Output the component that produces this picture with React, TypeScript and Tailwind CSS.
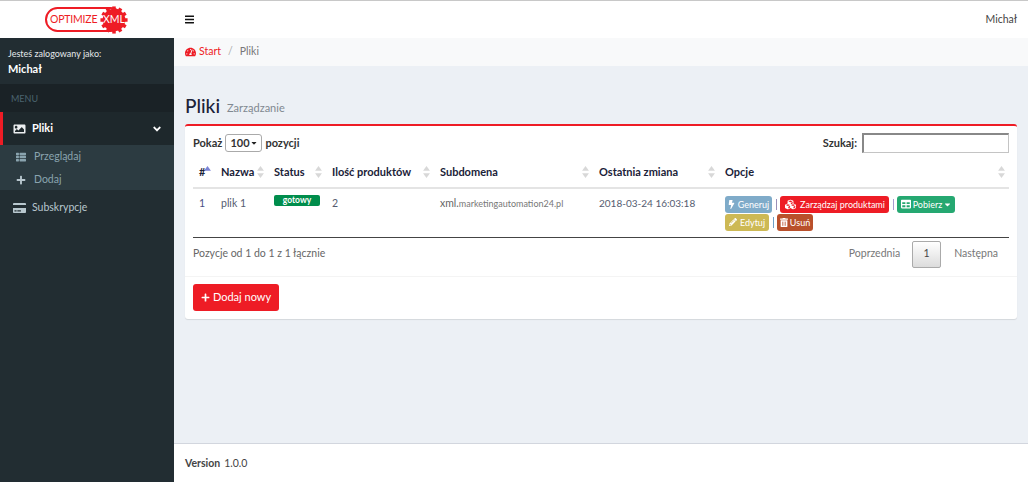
// App.tsx
// Optimize XML panel - file list screen
import type { ReactNode } from 'react';
import {
  FaBars,
  FaAngleDown,
  FaTachometerAlt,
  FaImage,
  FaThList,
  FaPlus,
  FaCreditCard,
  FaBolt,
  FaCubes,
  FaTable,
  FaPencilAlt,
  FaTrashAlt,
  FaCaretDown,
} from 'react-icons/fa';

function SortArrows({ active = false }: { active?: boolean }) {
  return (
    <svg viewBox="0 0 8 14" className="absolute right-[4px] top-[9px] h-[12px] w-[7px]">
      <path d="M4 0 L8 5.5 H0 Z" fill={active ? '#7b83d6' : '#d8d8d8'} />
      {!active && <path d="M4 14 L8 8.5 H0 Z" fill="#d8d8d8" />}
    </svg>
  );
}

function Logo() {
  // gear shaped badge behind the XML word
  const teeth = Array.from({ length: 12 }, (_, i) => (i * 360) / 12);
  return (
    <div className="relative flex h-[25px] w-[78px] items-center rounded-full border-2 border-[#ee1c25] pl-[3px]">
      <span className="text-[10.5px] leading-none tracking-[-0.2px] text-[#ee1c25]">OPTIMIZE</span>
      <svg viewBox="0 0 32 32" className="absolute right-[-8px] top-[-3px] h-[28px] w-[30px]">
        <circle cx="16" cy="16" r="13" fill="#ee1c25" />
        {teeth.map((a) => (
          <rect key={a} x="14" y="0.5" width="4" height="5" fill="#ee1c25" transform={`rotate(${a} 16 16)`} />
        ))}
      </svg>
      <span className="absolute right-[-4px] top-[5px] text-[10.5px] leading-none text-white">XML</span>
    </div>
  );
}

function Sidebar() {
  return (
    <aside className="flex w-[174px] shrink-0 flex-col bg-[#222d32]">
      <div className="h-[46px] px-[8px] pt-[9px] text-white">
        <p className="text-[9px] leading-[13px] text-[#e4e8ea]">Jesteś zalogowany jako:</p>
        <p className="mt-[2px] text-[11px] font-bold leading-[14px]">Michał</p>
      </div>
      <div className="flex h-[28px] items-center bg-[#1a2226] px-[11px] pt-[1px] text-[9px] text-[#4b646f]">MENU</div>
      <div className="flex h-[33px] items-center border-l-[3px] border-[#ee1c25] bg-[#1e282c] pl-[10px] pr-[12px] text-[11px] text-white">
        <FaImage className="mr-[6px] h-[12px] w-[13px] text-[#eceff1]" />
        <span className="font-bold">Pliki</span>
        <FaAngleDown className="ml-auto h-[12px] w-[10px] text-white" />
      </div>
      <div className="flex h-[45px] flex-col justify-center gap-[7px] bg-[#2c3b41] pt-[2px] text-[10.5px] text-[#8aa4af]">
        <div className="flex h-[16px] items-center pl-[16px]">
          <FaThList className="mr-[8px] h-[10px] w-[10px]" />
          <span>Przeglądaj</span>
        </div>
        <div className="flex h-[16px] items-center pl-[16px]">
          <FaPlus className="mr-[8px] h-[10px] w-[10px] text-[#b8c7ce]" />
          <span>Dodaj</span>
        </div>
      </div>
      <div className="flex h-[35px] items-center pl-[13px] pt-[1px] text-[10.5px] text-[#b8c7ce]">
        <FaCreditCard className="mr-[6px] h-[12px] w-[13px]" />
        <span>Subskrypcje</span>
      </div>
    </aside>
  );
}

function Th({ children, w, active }: { children: ReactNode; w: string; active?: boolean }) {
  return (
    <th className={`relative h-[31px] border-b-[2px] border-[#e4e4e4] pl-[6px] text-left text-[11px] font-bold text-[#1a2238] ${w}`}>
      {children}
      <SortArrows active={active} />
    </th>
  );
}

function Btn({ className, children }: { className: string; children: ReactNode }) {
  return (
    <span className={`inline-flex h-[17px] items-center justify-center gap-[2px] rounded-[3px] text-[9px] leading-none text-white ${className}`}>
      {children}
    </span>
  );
}

function Sep({ color }: { color: string }) {
  return <span className={`mx-[3.5px] inline-block h-[11px] w-[1px] ${color}`} />;
}

function FilesTable() {
  return (
    <table className="w-[816px] table-fixed border-collapse">
      <thead>
        <tr>
          <Th w="w-[22px]" active>#</Th>
          <Th w="w-[53px]">Nazwa</Th>
          <Th w="w-[58px]">Status</Th>
          <Th w="w-[108px]">Ilość produktów</Th>
          <Th w="w-[159px]">Subdomena</Th>
          <Th w="w-[126px]">Ostatnia zmiana</Th>
          <Th w="w-[290px]">Opcje</Th>
        </tr>
      </thead>
      <tbody>
        <tr className="h-[49px] border-b border-[#444] align-top text-[10.5px] text-[#555c70]">
          <td className="pl-[6px] pt-[7px] text-[#4a4f85]">1</td>
          <td className="pl-[6px] pt-[7px]">plik 1</td>
          <td className="pl-[6px] pt-[6px]">
            <span className="flex h-[11px] w-[46px] items-center justify-center rounded-[2px] bg-[#008d4c] text-[8.5px] font-bold leading-none text-white">
              gotowy
            </span>
          </td>
          <td className="pl-[6px] pt-[7px]">2</td>
          <td className="pl-[6px] pt-[7px] text-[10.5px] text-[#666]">
            xml.<span className="text-[9px] text-[#777]">marketingautomation24.pl</span>
          </td>
          <td className="pl-[6px] pt-[7px] text-[10px]">2018-03-24 16:03:18</td>
          <td className="pl-[6px] pt-[6px]">
            <div className="flex h-[18px] items-center">
              <Btn className="w-[47px] bg-[#7fabc9] text-[#dfe9f0]">
                <FaBolt className="h-[9px] w-[7px]" />
                <span className="ml-[1px]">Generuj</span>
              </Btn>
              <Sep color="bg-[#9a8fb8]" />
              <Btn className="w-[109px] bg-[#ee1c25]">
                <FaCubes className="h-[11px] w-[13px]" />
                <span className="ml-[1px]">Zarządzaj produktami</span>
              </Btn>
              <Sep color="bg-[#a99bd0]" />
              <Btn className="w-[58px] bg-[#25a871]">
                <FaTable className="h-[10px] w-[10px]" />
                Pobierz
                <FaCaretDown className="h-[9px] w-[7px]" />
              </Btn>
            </div>
            <div className="flex h-[18px] items-center">
              <Btn className="w-[44px] bg-[#cdb955] text-[#f4efcf]">
                <FaPencilAlt className="h-[8px] w-[8px]" />
                <span className="ml-[1px]">Edytuj</span>
              </Btn>
              <Sep color="bg-[#6fa0c8]" />
              <Btn className="w-[36px] bg-[#b9502b]">
                <FaTrashAlt className="h-[9px] w-[8px]" />
                <span>Usuń</span>
              </Btn>
            </div>
          </td>
        </tr>
      </tbody>
    </table>
  );
}

export default function App() {
  return (
    <div className="flex h-[482px] w-[1028px] flex-col overflow-hidden bg-[#ecf0f5] font-['Lato',sans-serif] text-[#333]">
      {/* Top bar */}
      <header className="flex h-[38px] shrink-0 items-center border-t border-[#c8c8c8] bg-white">
        <div className="w-[174px] shrink-0 pl-[45px]">
          <Logo />
        </div>
        <FaBars className="ml-[11px] h-[11px] w-[9px] text-[#111]" />
        <span className="ml-auto mr-[11px] text-[10.5px] text-[#444]">Michał</span>
      </header>

      <div className="flex min-h-0 flex-1">
        <Sidebar />
        <div className="flex min-w-0 flex-1 flex-col">
          {/* Breadcrumb */}
          <nav className="flex h-[28px] shrink-0 items-center bg-[#f8f9fa] pl-[11px] text-[10.5px]">
            <FaTachometerAlt className="mr-[3px] h-[10px] w-[11px] text-[#ee1c25]" />
            <span className="text-[#ee1c25]">Start</span>
            <span className="mx-[7px] text-[#aaa]">/</span>
            <span className="text-[#777]">Pliki</span>
          </nav>

          <main className="min-h-0 flex-1 pl-[11px] pr-[11px] pt-[27px]">
            <div className="flex h-[25px] items-end">
              <h1 className="text-[19px] font-medium leading-[25px] text-[#1a2238]">Pliki</h1>
              <span className="mb-[3px] ml-[7px] text-[11px] leading-[14px] text-[#808890]">Zarządzanie</span>
            </div>

            {/* Card */}
            <section className="mt-[6px] h-[195px] rounded-[3px] border-t-2 border-[#ee1c25] bg-white shadow-[0_1px_1px_rgba(0,0,0,0.1)]">
              <div className="px-[8px]">
                <div className="flex h-[31px] items-center justify-between pt-[3px] text-[11px] font-bold text-[#333]">
                  <div className="flex items-center">
                    Pokaż
                    <span className="mx-[3px] flex h-[18px] w-[37px] items-center justify-between rounded-[3px] border border-[#aaa] pl-[4px] pr-[4px] text-[11px] font-bold">
                      100
                      <FaCaretDown className="h-[8px] w-[6px] text-[#222]" />
                    </span>
                    pozycji
                  </div>
                  <div className="flex items-center">
                    Szukaj:
                    <span className="ml-[5px] h-[20px] w-[147px] border border-t-2 border-l-2 border-[#c4c4c4] border-t-[#888] border-l-[#888]" />
                  </div>
                </div>
                <FilesTable />
                <div className="flex h-[33px] items-center justify-between text-[10.5px] text-[#666]">
                  <span>Pozycje od 1 do 1 z 1 łącznie</span>
                  <div className="flex items-center pr-[11px]">
                    <span className="text-[#777]">Poprzednia</span>
                    <span className="ml-[12px] mr-[13px] flex h-[27px] w-[29px] items-center justify-center rounded-[2px] border border-[#aaa] bg-gradient-to-b from-white to-[#dcdcdc] text-[#444]">
                      1
                    </span>
                    <span className="text-[#777]">Następna</span>
                  </div>
                </div>
              </div>
              <div className="mt-[5px] flex h-[43px] items-center border-t border-[#f4f4f4] px-[8px]">
                <span className="flex h-[27px] w-[86px] items-center justify-center gap-[3px] rounded-[3px] bg-[#ee1c25] text-[11px] text-white">
                  <FaPlus className="h-[9px] w-[9px]" />
                  Dodaj nowy
                </span>
              </div>
            </section>
          </main>

          <footer className="flex h-[39px] shrink-0 items-center border-t border-[#d2d6de] bg-white pl-[11px] pt-[1px] text-[10.5px] text-[#444]">
            <b className="mr-[4px]">Version</b> 1.0.0
          </footer>
        </div>
      </div>
    </div>
  );
}
